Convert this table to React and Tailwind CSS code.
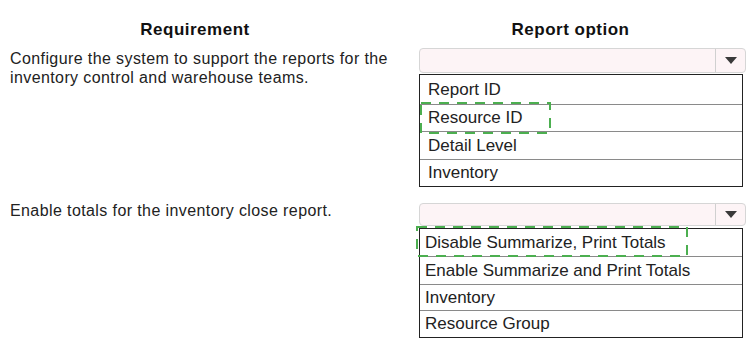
function Dropdown({ h }) {
  return (
    <div className={`${h} w-[327px] flex rounded-[4px] border border-[#d6d6d6] bg-[#fdf4f6]`}>
      <div className="flex-1" />
      <div className="w-[30px] border-l border-[#d0d0d0] flex items-center justify-center">
        <svg width="12" height="7" viewBox="0 0 12 7">
          <path d="M0 0 L12 0 L6 7 Z" fill="#3a3a3a" />
        </svg>
      </div>
    </div>
  )
}

function Dashed({ className, w, h }) {
  return (
    <svg className={`absolute pointer-events-none ${className}`} width={w} height={h}>
      <rect x="1" y="1" width={w - 2} height={h - 2} fill="none" stroke="#4caf50" strokeWidth="2" strokeDasharray="10 8" />
    </svg>
  )
}

function OptionList({ items, heights, pad, children }) {
  return (
    <div className="relative w-[324px] border border-[#222] bg-white">
      {items.map((item, i) => (
        <div
          key={item}
          className={`${heights[i]} ${pad} flex items-center text-[17px] ${i > 0 ? 'border-t border-[#8a8a8a]' : ''}`}
        >
          {item}
        </div>
      ))}
      {children}
    </div>
  )
}

export default function App() {
  return (
    <div className="w-[751px] h-[350px] bg-white text-[#222] font-['Liberation_Sans',Arial,sans-serif]">
      <div className="flex pt-5 text-[17px] leading-5 font-bold tracking-[0.5px] text-[#111]">
        <div className="w-[390px] text-center">Requirement</div>
        <div className="flex-1 text-center">Report option</div>
      </div>

      {/* row 1 */}
      <div className="flex mt-2">
        <div className="w-[400px] pl-[10px] pt-px text-[16px] leading-[19px] tracking-[0.4px]">
          Configure the system to support the reports for the inventory control and warehouse teams.
        </div>
        <div className="pl-[19px]">
          <Dropdown h="h-[25px]" />
          <div className="mt-px">
            <OptionList
              items={['Report ID', 'Resource ID', 'Detail Level', 'Inventory']}
              heights={['h-[29px]', 'h-[27px]', 'h-[28px]', 'h-[27px]']}
              pad="pl-2"
            >
              <Dashed className="left-0 top-[27px]" w={131} h={32} />
            </OptionList>
          </div>
        </div>
      </div>

      {/* row 2 */}
      <div className="flex mt-[14px]">
        <div className="w-[400px] pl-[10px] text-[16px] leading-[19px] tracking-[0.4px]">
          Enable totals for the inventory close report.
        </div>
        <div className="pl-[19px] pt-[2px]">
          <Dropdown h="h-[23px]" />
          <div className="mt-[2px]">
            <OptionList
              items={['Disable Summarize, Print Totals', 'Enable Summarize and Print Totals', 'Inventory', 'Resource Group']}
              heights={['h-[27px]', 'h-[28px]', 'h-[26px]', 'h-[27px]']}
              pad="pl-[5px]"
            >
              <Dashed className="-left-[4px] -top-[3px]" w={272} h={31} />
            </OptionList>
          </div>
        </div>
      </div>
    </div>
  )
}
